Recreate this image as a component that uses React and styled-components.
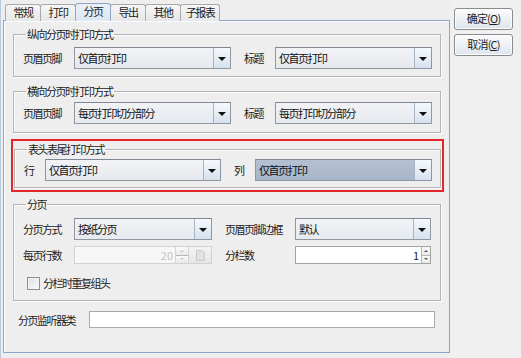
import React from "react";
import styled, { createGlobalStyle } from "styled-components";

const Global = createGlobalStyle`
  html, body { margin: 0; padding: 0; background: #eeeeee; }
  body {
    font-family: "Noto Sans CJK SC", "Microsoft YaHei", sans-serif;
    font-size: 11px;
    letter-spacing: -1.5px;
    color: #1a1a1a;
  }
  * { box-sizing: border-box; }
`;

const Window = styled.div`
  width: 521px;
  height: 358px;
  display: flex;
  background: #eeeeee;
  overflow: hidden;
`;

const LeftPane = styled.div`
  width: 450px;
  flex: none;
  display: flex;
  flex-direction: column;
  padding: 3px 0 5px 2px;
  border-left: 1px solid #b9cade;
`;

const TabBar = styled.div`
  display: flex;
  align-items: flex-end;
  height: 18px;
  padding-left: 2px;
  margin-bottom: -1px;
  position: relative;
  z-index: 1;
`;

const Tab = styled.div`
  width: ${(p) => p.w || 36}px;
  height: ${(p) => (p.active ? 18 : 17)}px;
  margin-right: -1px;
  border: 1px solid ${(p) => (p.active ? "#8fa6c3" : "#a9a9a9")};
  border-bottom: ${(p) => (p.active ? "1px solid #e3ebf5" : "none")};
  border-radius: 3px 3px 0 0;
  background: ${(p) =>
    p.active
      ? "linear-gradient(#e9f0f8, #dce6f2)"
      : "linear-gradient(#f6f6f6, #e7e7e7)"};
  text-align: center;
  line-height: 15px;
  color: #1a1a1a;
  position: relative;
  z-index: ${(p) => (p.active ? 2 : 1)};
`;

const Panel = styled.div`
  flex: 1;
  border: 1px solid #8ea6c6;
  box-shadow: inset 1px 1px 0 #f8fbff;
  background: #eeeeee;
  padding: 6px 8px 0 9px;
  display: flex;
  flex-direction: column;
`;

const Group = styled.fieldset`
  margin: ${(p) => p.mt || 0}px 0 0 0;
  padding: ${(p) => p.pt ?? 6}px 9px ${(p) => p.pb ?? 7}px 9px;
  border: 1px solid #b4b4b4;
  box-shadow: inset 1px 1px 0 #fbfbfb, 1px 1px 0 #fbfbfb;
  min-width: 0;
`;

const Legend = styled.legend`
  padding: 0 1px;
  margin-left: 3px;
  line-height: 14px;
  color: #1a1a1a;
`;

const Highlight = styled.div`
  margin: 6px -3px 0 -2px;
  padding: 1px 1px 2px 1px;
  border: 2px solid #e3262b;
`;

const Row = styled.div`
  display: flex;
  align-items: center;
  height: ${(p) => p.h || 22}px;
  margin-top: ${(p) => p.mt || 0}px;
`;

const Label = styled.span`
  width: ${(p) => p.w}px;
  margin-left: ${(p) => p.ml || 0}px;
  flex: none;
  white-space: nowrap;
  color: #1a1a1a;
`;

const ComboBox = styled.div`
  width: ${(p) => p.w}px;
  height: 22px;
  flex: none;
  display: flex;
  border: 1px solid #8f97a3;
  border-top-color: #7f8792;
  background: ${(p) =>
    p.selected
      ? "linear-gradient(#b4c1d2, #a6b5c8)"
      : "linear-gradient(#f1f3f6, #e6e9ee)"};
`;

const ComboText = styled.span`
  flex: 1;
  padding-left: 3px;
  line-height: 20px;
  white-space: nowrap;
  overflow: hidden;
  color: #111;
`;

const ArrowBtn = styled.span`
  width: 17px;
  flex: none;
  border-left: 1px solid #a9b4c2;
  background: linear-gradient(#f7fafd, #d5e1ee);
  display: flex;
  align-items: center;
  justify-content: center;
`;

const Caret = styled.span`
  width: 0;
  height: 0;
  border-left: 4px solid transparent;
  border-right: 4px solid transparent;
  border-top: 4px solid #111;
  margin-top: 1px;
`;

const Combo = ({ w, value, selected }) => (
  <ComboBox w={w} selected={selected}>
    <ComboText>{value}</ComboText>
    <ArrowBtn>
      <Caret />
    </ArrowBtn>
  </ComboBox>
);

const SpinBox = styled.div`
  width: ${(p) => p.w}px;
  height: 18px;
  flex: none;
  display: flex;
  border: 1px solid ${(p) => (p.disabled ? "#d2d2d2" : "#a3a3a3")};
  background: ${(p) => (p.disabled ? "#f7f7f7" : "#ffffff")};
`;

const SpinValue = styled.span`
  flex: 1;
  text-align: right;
  padding-right: 2px;
  line-height: 16px;
  letter-spacing: 0;
  color: ${(p) => (p.disabled ? "#c4c4c4" : "#1a1a1a")};
`;

const SpinArrows = styled.span`
  width: ${(p) => p.w}px;
  flex: none;
  display: flex;
  flex-direction: column;
  border-left: 1px solid ${(p) => (p.disabled ? "#d6d6d6" : "#b7b7b7")};
`;

const SpinHalf = styled.span`
  flex: 1;
  display: flex;
  align-items: center;
  justify-content: center;
  background: linear-gradient(#fafafa, #e9e9e9);
  & + & {
    border-top: 1px solid ${(p) => (p.disabled ? "#d6d6d6" : "#b7b7b7")};
  }
`;

const Tri = styled.span`
  width: 0;
  height: 0;
  border-left: 2px solid transparent;
  border-right: 2px solid transparent;
  ${(p) =>
    p.up
      ? `border-bottom: 2px solid ${p.disabled ? "#c8c8c8" : "#555"};`
      : `border-top: 2px solid ${p.disabled ? "#c8c8c8" : "#555"};`}
`;

const FileBtn = styled.span`
  width: 23px;
  flex: none;
  border-left: 1px solid #d6d6d6;
  background: linear-gradient(#f4f4f4, #e6e6e6);
  display: flex;
  align-items: center;
  justify-content: center;
`;

const Spinner = ({ w, value, disabled, arrowW, file }) => (
  <SpinBox w={w} disabled={disabled}>
    <SpinValue disabled={disabled}>{value}</SpinValue>
    <SpinArrows w={arrowW} disabled={disabled}>
      <SpinHalf disabled={disabled}>
        <Tri up disabled={disabled} />
      </SpinHalf>
      <SpinHalf disabled={disabled}>
        <Tri disabled={disabled} />
      </SpinHalf>
    </SpinArrows>
    {file && (
      <FileBtn>
        <svg width="9" height="11" viewBox="0 0 9 11">
          <path d="M0.5 0.5h5.5l2.5 2.5v7.5h-8z" fill="#e2e2e2" stroke="#c9c9c9" />
        </svg>
      </FileBtn>
    )}
  </SpinBox>
);

const CheckRow = styled.label`
  display: flex;
  align-items: center;
  height: 14px;
  margin-top: 12px;
  padding-left: 4px;
  color: #1a1a1a;
`;

const CheckBox = styled.span`
  width: 13px;
  height: 13px;
  border: 1px solid #8e8f8f;
  background: linear-gradient(135deg, #dcdfe3, #fbfbfb);
  box-shadow: inset 0 0 0 1px #f4f4f4;
  margin-right: 3px;
  flex: none;
`;

const FieldRow = styled.div`
  display: flex;
  align-items: center;
  margin-top: 10px;
  padding-left: 5px;
`;

const TextField = styled.div`
  width: ${(p) => p.w}px;
  height: 17px;
  border: 1px solid #a9a9a9;
  background: #fff;
`;

const RightPane = styled.div`
  flex: 1;
  display: flex;
  flex-direction: column;
  gap: 4px;
  padding: 8px 0 0 4px;
  background: #f0f0f0;
`;

const Button = styled.div`
  width: 59px;
  height: 22px;
  border: 1px solid #8a8c90;
  border-radius: 3px;
  background: linear-gradient(#fbfcfd 0%, #eef2f6 45%, #dde5ee 100%);
  box-shadow: inset 0 0 0 1px #fdfdfd;
  text-align: center;
  line-height: 19px;
  letter-spacing: -0.8px;
  color: #1e1e1e;
  & u { text-decoration: underline; }
`;

const tabs = [
  { t: "常规" },
  { t: "打印" },
  { t: "分页", active: true },
  { t: "导出" },
  { t: "其他" },
  { t: "子报表", w: 40 },
];

export default function App() {
  return (
    <>
      <Global />
      <Window>
        <LeftPane>
          <TabBar>
            {tabs.map((x) => (
              <Tab key={x.t} active={x.active} w={x.w}>
                {x.t}
              </Tab>
            ))}
          </TabBar>
          <Panel>
            <Group pt={6} pb={7}>
              <Legend>纵向分页时打印方式</Legend>
              <Row>
                <Label w={51}>页眉页脚</Label>
                <Combo w={157} value="仅首页打印" />
                <Label w={31} ml={13}>标题</Label>
                <Combo w={157} value="仅首页打印" />
              </Row>
            </Group>
            <Group mt={7} pt={4} pb={8}>
              <Legend>横向分页时打印方式</Legend>
              <Row>
                <Label w={51}>页眉页脚</Label>
                <Combo w={157} value="每页打印切分部分" />
                <Label w={31} ml={13}>标题</Label>
                <Combo w={157} value="每页打印切分部分" />
              </Row>
            </Group>
            <Highlight>
              <Group pt={3} pb={6}>
                <Legend>表头表尾打印方式</Legend>
                <Row>
                  <Label w={21}>行</Label>
                  <Combo w={176} value="仅首页打印" />
                  <Label w={21} ml={13}>列</Label>
                  <Combo w={177} value="仅首页打印" selected />
                </Row>
              </Group>
            </Highlight>
            <Group mt={5} pt={7} pb={10}>
              <Legend>分页</Legend>
              <Row>
                <Label w={51}>分页方式</Label>
                <Combo w={138} value="按纸分页" />
                <Label w={70} ml={13}>页眉页脚边框</Label>
                <Combo w={136} value="默认" />
              </Row>
              <Row h={18} mt={6}>
                <Label w={51}>每页行数</Label>
                <Spinner w={138} value="20" disabled arrowW={13} file />
                <Label w={70} ml={13}>分栏数</Label>
                <Spinner w={136} value="1" arrowW={9} />
              </Row>
              <CheckRow>
                <CheckBox />
                分栏时重复组头
              </CheckRow>
            </Group>
            <FieldRow>
              <Label w={71}>分页监听器类</Label>
              <TextField w={346} />
            </FieldRow>
          </Panel>
        </LeftPane>
        <RightPane>
          <Button>
            确定(<u>O</u>)
          </Button>
          <Button>
            取消(<u>C</u>)
          </Button>
        </RightPane>
      </Window>
    </>
  );
}
